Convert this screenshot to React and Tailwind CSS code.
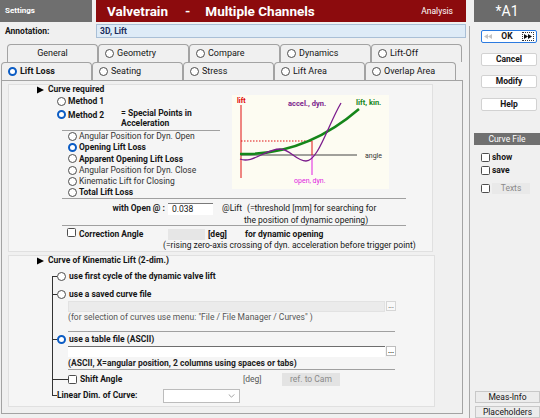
import React from 'react';

function Radio({ on = false }) {
  return on ? (
    <span className="box-border inline-block h-[9px] w-[9px] shrink-0 rounded-full border-[2.5px] border-[#0b5cc4] bg-white" />
  ) : (
    <span className="box-border inline-block h-[9px] w-[9px] shrink-0 rounded-full border border-[#4d4d4d] bg-white" />
  );
}

function Check() {
  return <span className="box-border inline-block h-[9px] w-[9px] shrink-0 rounded-[1.5px] border border-[#4d4d4d] bg-white" />;
}

function Tri() {
  return (
    <svg viewBox="0 0 8 8" className="h-[8px] w-[7px] shrink-0">
      <path d="M0 0 L8 4 L0 8 Z" fill="#000" />
    </svg>
  );
}

function Dbl({ left = false, color }) {
  return (
    <svg viewBox="0 0 10 6" className="h-[5px] w-[8px] shrink-0">
      <path d={left ? 'M5 0 L0 3 L5 6 Z M10 0 L5 3 L10 6 Z' : 'M0 0 L5 3 L0 6 Z M5 0 L10 3 L5 6 Z'} fill={color} />
    </svg>
  );
}

const topTabs = [
  { label: 'General', radio: false },
  { label: 'Geometry', radio: true },
  { label: 'Compare', radio: true },
  { label: 'Dynamics', radio: true },
  { label: 'Lift-Off', radio: true },
];
const bottomTabs = ['Lift Loss', 'Seating', 'Stress', 'Lift Area', 'Overlap Area'];

function Tab({ label, radio = true, active = false }) {
  return (
    <div
      className={`flex h-[18px] w-[91px] shrink-0 items-center gap-[3px] rounded-t-[4px] border border-b-0 border-[#a3a3a3] bg-[#f0f0f0] text-[9px] ${
        radio ? 'pl-[6px]' : 'justify-center'
      } ${active ? 'font-bold' : ''}`}
    >
      {radio && <Radio on={active} />}
      <span>{label}</span>
    </div>
  );
}

// tree connector column (x 52)
function Gut({ pos }) {
  const topLine = pos !== 'first';
  const branch = pos !== 'pass';
  const bottomLine = pos !== 'last';
  return (
    <div className="flex w-[5px] shrink-0 flex-col self-stretch">
      <div className={`flex-1 ${topLine ? 'border-l border-[#333]' : ''} ${branch ? 'border-b border-[#333]' : ''}`} />
      <div className={`flex-1 ${bottomLine ? 'border-l border-[#333]' : ''}`} />
    </div>
  );
}

function Chart() {
  return (
    <svg viewBox="0 0 157 94" className="mt-[10px] h-[94px] w-[157px] shrink-0 bg-[#fdfcf2] font-['Roboto',sans-serif]">
      <text x="5" y="8" fontSize="7" fontWeight="700" fill="#e00000">lift</text>
      <line x1="9" y1="10" x2="9" y2="83" stroke="#e01010" strokeWidth="1" />
      <line x1="9" y1="60" x2="125" y2="60" stroke="#444" strokeWidth="1" />
      <text x="133" y="63" fontSize="7" fill="#333">angle</text>
      <line x1="9" y1="46" x2="80" y2="46" stroke="#e01010" strokeWidth="1" strokeDasharray="1.5 1.5" />
      <line x1="80" y1="46" x2="80" y2="60" stroke="#e01010" strokeWidth="1" />
      <line x1="80" y1="60" x2="80" y2="80" stroke="#e020e0" strokeWidth="1" />
      <path d="M8 59 C50 60, 90 46, 127 14" fill="none" stroke="#15861a" strokeWidth="2.5" />
      <path
        d="M8 64 C20 69, 34 54, 48 54 C58 54, 64 66, 74 66 C86 66, 96 30, 109 8"
        fill="none"
        stroke="#7b1c8c"
        strokeWidth="1.3"
      />
      <text x="56" y="11" fontSize="7.5" fontWeight="700" fill="#7b1c8c">accel., dyn.</text>
      <text x="124" y="10" fontSize="7.5" fontWeight="700" fill="#15861a">lift, kin.</text>
      <text x="62" y="88" fontSize="7" fill="#e020e0">open, dyn.</text>
    </svg>
  );
}

const liftOptions = [
  { label: 'Angular Position for Dyn. Open', bold: false },
  { label: 'Opening Lift Loss', bold: true, on: true },
  { label: 'Apparent Opening Lift Loss', bold: true },
  { label: 'Angular Position for Dyn. Close', bold: false },
  { label: 'Kinematic Lift for Closing', bold: false },
  { label: 'Total Lift Loss', bold: true },
];

function SideBtn({ children, className = '' }) {
  return (
    <div className={`ml-[11px] flex h-[13px] w-[56px] items-center justify-center rounded-[2px] border border-[#d2d2d2] bg-white font-bold ${className}`}>
      {children}
    </div>
  );
}

export default function App() {
  return (
    <div className="flex h-[418px] w-[540px] overflow-hidden bg-[#f0f0f0] font-['Roboto',sans-serif] text-[8.5px] text-[#151515]">
      {/* main column */}
      <div className="flex w-[466px] shrink-0 flex-col">
        <div className="flex h-[22px] shrink-0 gap-[4px]">
          <div className="flex w-[92px] items-center bg-[#6f6f6f] pl-[5px] text-[8px] font-bold text-white">Settings</div>
          <div className="flex flex-1 items-center bg-[#8c0b0d] pl-[11px] pr-[13px] text-white">
            <span className="text-[13.5px] font-bold">Valvetrain</span>
            <span className="ml-[17px] text-[13.5px] font-bold">-</span>
            <span className="ml-[15px] text-[13.5px] font-bold">Multiple Channels</span>
            <span className="ml-auto text-[8.5px]">Analysis</span>
          </div>
        </div>

        <div className="mt-[2px] flex h-[14px] shrink-0 items-center">
          <div className="w-[96px] pl-[5px] font-bold">Annotation:</div>
          <div className="flex h-full flex-1 items-center border border-[#a9bfd6] bg-[#deebf7] pl-[3px] font-bold text-[#1b2b5b]">3D, Lift</div>
        </div>

        {/* tabs */}
        <div className="mt-[6px] flex shrink-0 pl-[7px]">
          {topTabs.map((t) => (
            <Tab key={t.label} label={t.label} radio={t.radio} />
          ))}
        </div>
        <div className="flex shrink-0 pl-[1px]">
          {bottomTabs.map((t, i) => (
            <Tab key={t} label={t} active={i === 0} />
          ))}
        </div>

        {/* tab page */}
        <div className="mb-[4px] ml-[1px] mr-[3px] flex-1 border border-[#a3a3a3] bg-[#f0f0f0] pl-[6px] pt-[3px]">
          {/* curve required */}
          <div className="box-border flex h-[168px] w-[425px] flex-col border border-[#e0e0e0] bg-[#f5f5f5]">
            <div className="flex">
              <div className="w-[223px] pl-[28px]">
                <div className="flex h-[9px] items-center gap-[4px] font-bold">
                  <Tri />
                  <span>Curve required</span>
                </div>
                <div className="mt-[2px] flex h-[11px] items-center gap-[2px] pl-[20px] font-bold">
                  <Radio />
                  <span>Method 1</span>
                </div>
                <div className="mt-[1px] flex h-[20px] items-start pl-[20px] font-bold">
                  <span className="mt-[2px]">
                    <Radio on />
                  </span>
                  <span className="ml-[2px] mt-[1.5px] w-[53px] leading-[11px]">Method 2</span>
                  <div className="mt-[1px] leading-[9.5px]">
                    <div>= Special Points in</div>
                    <div>Acceleration</div>
                  </div>
                </div>
                <div className="ml-[25px] mt-[2px] h-px w-[158px] bg-[#a0a0a0]" />
                <div className="pl-[31px]">
                  {liftOptions.map((o) => (
                    <div key={o.label} className={`flex h-[11.2px] items-center gap-[2px] ${o.bold ? 'font-bold' : 'text-[#333]'}`}>
                      <Radio on={o.on} />
                      <span>{o.label}</span>
                    </div>
                  ))}
                </div>
              </div>
              <Chart />
            </div>

            <div className="ml-[53px] h-px w-[344px] bg-[#a0a0a0]" />
            <div className="mt-[3px] flex h-[23px] items-start leading-[12px]">
              <div className="w-[156px] text-right font-bold">with Open @ :</div>
              <div className="ml-[3px] mt-[1px] box-border h-[12px] w-[45px] border-t border-[#7a7a7a] bg-white pl-[4px] leading-[11px]">0.038</div>
              <span className="ml-[9px]">@Lift</span>
              <div className="ml-[5px]">
                <div>(=threshold [mm] for searching for</div>
                <div className="-ml-[3px]">the position of dynamic opening)</div>
              </div>
            </div>
            <div className="ml-[53px] h-px w-[344px] bg-[#a0a0a0]" />
            <div className="mt-[2px] flex h-[12px] items-center font-bold">
              <span className="ml-[58px]">
                <Check />
              </span>
              <span className="ml-[3px] w-[89px]">Correction Angle</span>
              <span className="h-[11px] w-[37px] bg-[#e6e6e6]" />
              <span className="ml-[3px] w-[37px]">[deg]</span>
              <span>for dynamic opening</span>
            </div>
            <div className="flex h-[11px] items-center pl-[154px]">
              (=rising zero-axis crossing of dyn. acceleration before trigger point)
            </div>
          </div>

          {/* curve of kinematic lift */}
          <div className="mt-[3px] box-border h-[152px] w-[427px] border border-[#e0e0e0] bg-[#f5f5f5]">
            <div className="flex h-[9px] items-center gap-[4px] pl-[28px] font-bold">
              <Tri />
              <span>Curve of Kinematic Lift (2-dim.)</span>
            </div>
            <div className="mt-[5px] pl-[43px]">
              <div className="flex h-[12px] items-center font-bold">
                <Gut pos="first" />
                <Radio />
                <span className="ml-[3px]">use first cycle of the dynamic valve lift</span>
              </div>
              <div className="flex h-[6px]">
                <Gut pos="pass" />
              </div>
              <div className="flex h-[12px] items-center font-bold">
                <Gut pos="mid" />
                <Radio />
                <span className="ml-[3px]">use a saved curve file</span>
              </div>
              <div className="flex h-[12px] items-center">
                <Gut pos="pass" />
                <div className="ml-[11px] h-[11px] w-[317px] border border-[#e2e2e2] bg-[#ebebeb]" />
                <div className="ml-[1px] flex h-[10px] w-[10px] items-end justify-center border border-[#d6d6d6] bg-[#f8f8f8] text-[7px] leading-[7px]">...</div>
              </div>
              <div className="flex h-[10px] items-center text-[#555]">
                <Gut pos="pass" />
                <span className="ml-[11px]">(for selection of curves use menu: "File / File Manager / Curves" )</span>
              </div>
              <div className="flex h-[11px]">
                <Gut pos="pass" />
                <div className="ml-[11px] mt-[9px] h-px w-[327px] bg-[#a0a0a0]" />
              </div>
              <div className="flex h-[12px] items-center font-bold">
                <Gut pos="mid" />
                <Radio on />
                <span className="ml-[3px]">use a table file (ASCII)</span>
              </div>
              <div className="flex h-[13px]">
                <Gut pos="pass" />
                <div className="ml-[11px] mt-[1px] box-border h-[11px] w-[317px] border-t border-[#6e6e6e] bg-white" />
                <div className="ml-[1px] mt-[1px] flex h-[10px] w-[10px] items-end justify-center border border-[#bdbdbd] bg-white text-[7px] font-bold leading-[7px]">...</div>
              </div>
              <div className="flex h-[10px] items-center font-bold text-[#222]">
                <Gut pos="pass" />
                <span className="ml-[11px]">(ASCII, X=angular position, 2 columns using spaces or tabs)</span>
              </div>
              <div className="flex h-[3px]">
                <Gut pos="pass" />
                <div className="ml-[11px] mt-[1px] h-px w-[327px] bg-[#a0a0a0]" />
              </div>
              <div className="flex h-[16px] items-center">
                <Gut pos="mid" />
                <div className="h-px w-[11px] bg-[#333]" />
                <Check />
                <span className="ml-[3px] w-[163px] font-bold">Shift Angle</span>
                <span className="w-[39px] text-[#555]">[deg]</span>
                <div className="flex h-[13px] w-[58px] items-center justify-center bg-[#e3e3e3] text-[#8a8a8a]">ref. to Cam</div>
              </div>
              <div className="flex h-[17px] items-center">
                <Gut pos="last" />
                <span className="w-[106px] font-bold">Linear Dim. of Curve:</span>
                <div className="flex h-[14px] w-[77px] items-center justify-end border border-[#bcbcbc] bg-white pr-[4px]">
                  <svg viewBox="0 0 8 5" className="h-[4px] w-[7px]">
                    <path d="M0.5 0.5 L4 4 L7.5 0.5" fill="none" stroke="#8a8a8a" strokeWidth="1" />
                  </svg>
                </div>
              </div>
            </div>
          </div>
        </div>
      </div>

      {/* right sidebar */}
      <div className="flex w-[74px] shrink-0 flex-col">
        <div className="ml-[8px] flex h-[22px] shrink-0 items-center justify-center bg-[#6b6b6b] text-[14px] text-white">*A1</div>
        <div className="ml-[3px] mt-[4px] flex flex-1 flex-col border-l border-[#a8a8a8]">
          <div className="ml-[11px] mt-[4px] flex h-[13px] w-[56px] items-center rounded-[2px] border border-[#2c7be0] bg-white px-[2px]">
            <Dbl left color="#c4c4c4" />
            <span className="flex-1 text-center font-bold">OK</span>
            <span className="flex h-[9px] items-center border border-dotted border-[#333] px-[1px]">
              <Dbl color="#111" />
            </span>
          </div>
          <SideBtn className="mt-[10px]">Cancel</SideBtn>
          <SideBtn className="mt-[9px]">Modify</SideBtn>
          <SideBtn className="mt-[10px]">Help</SideBtn>
          <div className="ml-[4px] mt-[22px] flex h-[12px] items-center justify-center bg-[#707070] text-white">Curve File</div>
          <div className="ml-[11px] mt-[8px] flex h-[9px] items-center gap-[2px] font-bold">
            <Check />
            <span>show</span>
          </div>
          <div className="ml-[11px] mt-[4px] flex h-[9px] items-center gap-[2px] font-bold">
            <Check />
            <span>save</span>
          </div>
          <div className="ml-[11px] mt-[8px] flex h-[11px] items-center">
            <Check />
            <div className="ml-[2px] flex h-[11px] w-[38px] items-center justify-center bg-[#e9e9e9] text-[#8a8a8a]">Texts</div>
          </div>
          <div className="flex-1" />
          <div className="ml-[5px] flex h-[12px] items-center justify-center border border-[#c8c8c8] bg-[#ececec]">Meas-Info</div>
          <div className="ml-[5px] mt-[3px] flex h-[12px] items-center justify-center border border-[#c8c8c8] bg-[#ececec]">Placeholders</div>
        </div>
      </div>
    </div>
  );
}
